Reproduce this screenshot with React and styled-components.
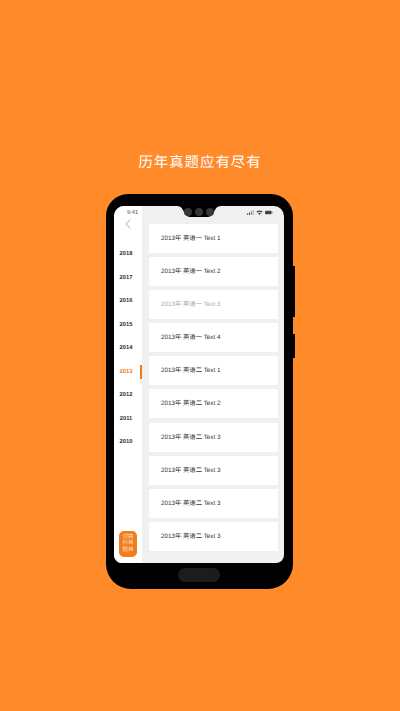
import styled, { createGlobalStyle } from "styled-components";

const years = ["2018", "2017", "2016", "2015", "2014", "2013", "2012", "2011", "2010"];

const papers = [
  { title: "2013年 英语一 Text 1" },
  { title: "2013年 英语一 Text 2" },
  { title: "2013年 英语一 Text 3", read: true },
  { title: "2013年 英语一 Text 4" },
  { title: "2013年 英语二 Text 1" },
  { title: "2013年 英语二 Text 2" },
  { title: "2013年 英语二 Text 3" },
  { title: "2013年 英语二 Text 3" },
  { title: "2013年 英语二 Text 3" },
  { title: "2013年 英语二 Text 3" },
];

const GlobalStyle = createGlobalStyle`
  html, body {
    margin: 0;
    padding: 0;
  }
  body {
    font-family: "Liberation Sans", "Noto Sans CJK SC", sans-serif;
    text-rendering: geometricPrecision;
  }
`;

const App = () => {
  return (
    <Page>
      <GlobalStyle />
      <Heading>历年真题应有尽有</Heading>
      <Phone>
        <SideButton $top={72} $height={51} />
        <SideButton $top={140} $height={24} />
        <Screen>
          <Notch>
            <NotchShape width="46" height="11" viewBox="0 0 46 11">
              <path d="M0 0 C5 0 6 2 8 6 C10 10 12 11 15 11 H31 C34 11 36 10 38 6 C40 2 41 0 46 0 Z" fill="#000" />
            </NotchShape>
            <Lens />
            <Lens />
            <Lens />
          </Notch>
          <Sidebar>
            <Clock>9:41</Clock>
            <BackIcon width="6" height="10" viewBox="0 0 6 10">
              <path d="M5.5 0.5 L0.8 5 L5.5 9.5" fill="none" stroke="#8a8a8a" strokeWidth="0.7" />
            </BackIcon>
            <YearList>
              {years.map((year) => (
                <Year key={year} $active={year === "2013"}>
                  {year}
                </Year>
              ))}
            </YearList>
            <SwitchButton>
              切换
              <br />
              科目
              <br />
              题目
            </SwitchButton>
          </Sidebar>
          <Content>
            <StatusIcons>
              <svg width="7" height="5" viewBox="0 0 7 5">
                <rect x="0" y="3.4" width="1.1" height="1.6" fill="#555" />
                <rect x="1.9" y="2.4" width="1.1" height="2.6" fill="#555" />
                <rect x="3.8" y="1.2" width="1.1" height="3.8" fill="#888" />
                <rect x="5.7" y="0" width="1.1" height="5" fill="#aaa" />
              </svg>
              <svg width="7" height="5" viewBox="0 0 7 5">
                <path d="M0.3 1.7 Q3.5 -0.9 6.7 1.7 L5.7 2.7 Q3.5 1 1.3 2.7 Z" fill="#444" />
                <path d="M2 3.3 Q3.5 2.2 5 3.3 L3.5 5 Z" fill="#444" />
              </svg>
              <svg width="8" height="5" viewBox="0 0 8 5">
                <rect x="0" y="0.7" width="6.6" height="3.6" rx="0.8" fill="#444" />
                <rect x="7" y="1.8" width="0.7" height="1.4" fill="#777" />
              </svg>
            </StatusIcons>
            <PaperList>
              {papers.map((paper, index) => (
                <Paper key={index} $read={paper.read}>
                  {paper.title}
                </Paper>
              ))}
            </PaperList>
          </Content>
        </Screen>
        <HomeBar />
      </Phone>
    </Page>
  );
};

const Page = styled.div`
  width: 400px;
  height: 711px;
  overflow: hidden;
  background-color: #ff8a29;
  display: flex;
  flex-direction: column;
  align-items: center;
`;

const Heading = styled.h1`
  margin: 152px 0 0;
  height: 20px;
  font-size: 14.5px;
  line-height: 20px;
  font-weight: 400;
  letter-spacing: 0.9px;
  color: #ffffff;
  font-family: "Noto Sans CJK SC", sans-serif;
`;

const Phone = styled.div`
  position: relative;
  box-sizing: border-box;
  margin: 22px 1px 0 0;
  width: 187px;
  height: 395px;
  padding: 12px 9px 0 8px;
  background-color: #000000;
  border-radius: 22px 22px 25px 25px;
  display: flex;
  flex-direction: column;
  align-items: center;
`;

const SideButton = styled.div`
  position: absolute;
  right: -2px;
  top: ${(props) => props.$top}px;
  width: 2px;
  height: ${(props) => props.$height}px;
  background-color: #000000;
`;

const Screen = styled.div`
  position: relative;
  width: 170px;
  height: 357px;
  background-color: #f0f0f0;
  border-radius: 10px 10px 8px 8px;
  overflow: hidden;
  display: flex;
`;

const Notch = styled.div`
  position: absolute;
  top: 0;
  left: 62px;
  width: 46px;
  height: 11px;
  display: flex;
  justify-content: center;
  align-items: flex-start;
  gap: 3px;
  padding-top: 2px;
  box-sizing: border-box;
`;

const NotchShape = styled.svg`
  position: absolute;
  top: 0;
  left: 0;
`;

const Lens = styled.div`
  position: relative;
  width: 8px;
  height: 8px;
  border-radius: 50%;
  background-color: #363636;
`;

const Sidebar = styled.aside`
  width: 28px;
  flex-shrink: 0;
  background-color: #ffffff;
  display: flex;
  flex-direction: column;
  align-items: center;
  position: relative;
`;

const Clock = styled.div`
  align-self: flex-start;
  margin: 4px 0 0 13px;
  height: 7px;
  font-size: 5.8px;
  line-height: 7px;
  white-space: nowrap;
  color: #555555;
`;

const BackIcon = styled.svg`
  align-self: flex-start;
  margin: 2px 0 0 11px;
`;

const YearList = styled.ul`
  list-style: none;
  margin: 19px 0 0;
  padding: 0;
  width: 100%;
  display: flex;
  flex-direction: column;
  gap: 11.55px;
`;

const Year = styled.li`
  position: relative;
  height: 12px;
  padding-right: 4px;
  box-sizing: border-box;
  text-align: center;
  font-size: 5.8px;
  line-height: 12px;
  font-weight: 700;
  color: ${(props) => (props.$active ? "#f07a1c" : "#333333")};

  &::after {
    content: "";
    display: ${(props) => (props.$active ? "block" : "none")};
    position: absolute;
    right: 0;
    top: -1px;
    width: 2px;
    height: 14px;
    background-color: #f07a1c;
  }
`;

const SwitchButton = styled.div`
  margin-top: auto;
  margin-bottom: 6.5px;
  width: 18px;
  height: 26px;
  border-radius: 5px;
  background-color: #f27b1d;
  color: #ffe3c8;
  font-size: 5.5px;
  line-height: 6.8px;
  text-align: center;
  padding-top: 3px;
  box-sizing: border-box;
`;

const Content = styled.main`
  flex: 1;
  display: flex;
  flex-direction: column;
  min-width: 0;
`;

const StatusIcons = styled.div`
  height: 10px;
  padding: 3px 11px 0 0;
  box-sizing: border-box;
  display: flex;
  justify-content: flex-end;
  align-items: center;
  gap: 2px;
`;

const PaperList = styled.div`
  margin: 8px 6px 0 7px;
  display: flex;
  flex-direction: column;
  gap: 4.1px;
`;

const Paper = styled.div`
  height: 29px;
  background-color: #ffffff;
  padding-left: 12px;
  font-size: 6.3px;
  line-height: 30px;
  color: ${(props) => (props.$read ? "#aaaaaa" : "#333333")};
`;

const HomeBar = styled.div`
  margin-top: 5px;
  width: 42px;
  height: 14px;
  border-radius: 7px;
  background-color: #1c1c1c;
`;

export default App;
